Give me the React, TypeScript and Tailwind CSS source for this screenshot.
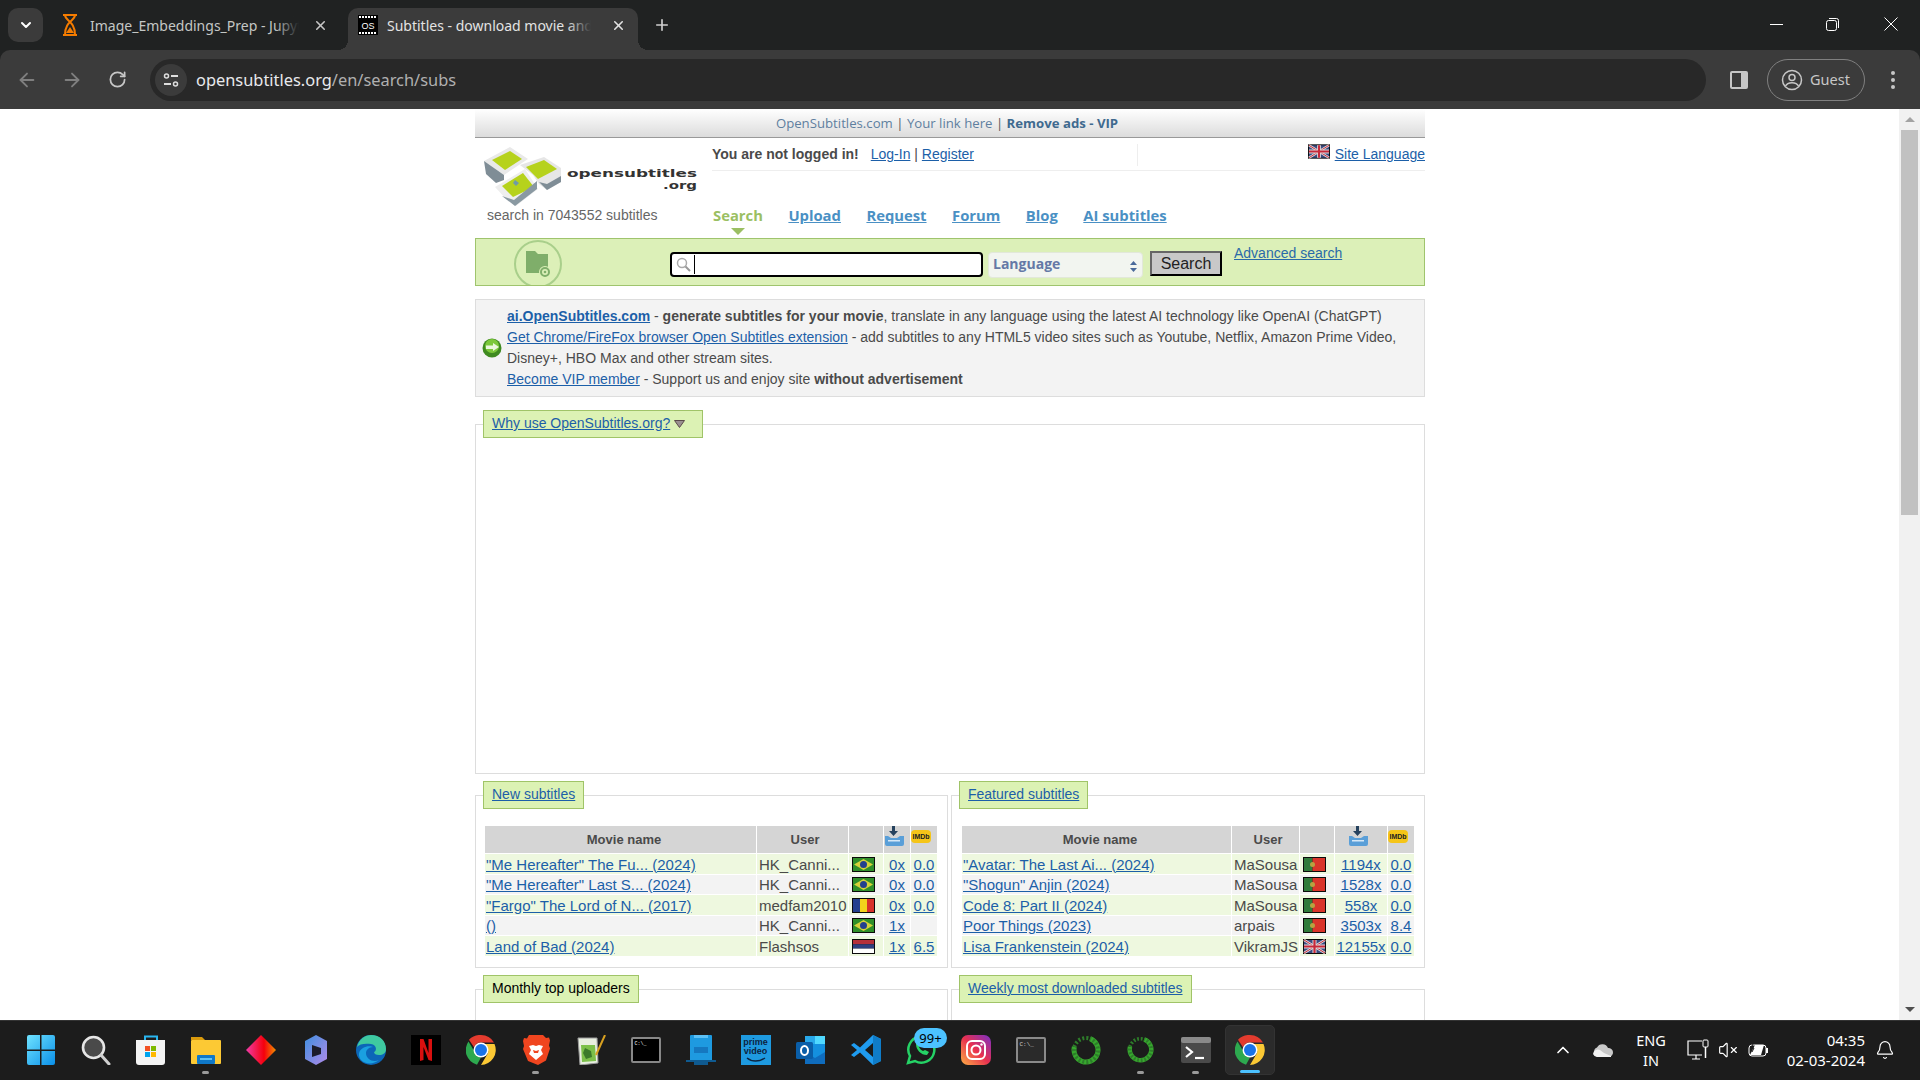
import React from "react";
import { ArrowLeft, ArrowRight, RotateCw, X, Plus, ChevronDown, ChevronUp, Bell, VolumeX } from "lucide-react";

const Link = ({ children, className = "" }: { children: React.ReactNode; className?: string }) => (
  <a className={`text-[#1c5fa8] underline ${className}`}>{children}</a>
);

const ChromeIcon = () => (
  <svg width="30" height="30" viewBox="0 0 30 30">
    <path d="M15 0a15 15 0 0 1 13 7.500H15a7.500 7.500 0 0 0-7 4.700L3 4.800A15 15 0 0 1 15 0z" fill="#e33b2e" />
    <path d="M2.500 6.500 9 17.500a7.500 7.500 0 0 0 6 5l-4 7.200A15 15 0 0 1 2.500 6.500z" fill="#2da94f" />
    <path d="M28.500 9H16a7.500 7.500 0 0 1 6 9l-7 12A15 15 0 0 0 28.500 9z" fill="#fcc934" />
    <circle cx="15" cy="15" r="7.500" fill="#fff" />
    <circle cx="15" cy="15" r="6" fill="#1a73e8" />
  </svg>
);

const Ring = ({ size }: { size: number }) => (
  <svg width={size} height={size} viewBox="0 0 30 30">
    <circle cx="15" cy="15" r="12" fill="none" stroke="#37a82e" strokeWidth="5" strokeDasharray="55 20" transform="rotate(-70 15 15)" />
    <circle cx="15" cy="15" r="12" fill="none" stroke="#2e7d2a" strokeWidth="4" strokeDasharray="2 2" strokeDashoffset="-55" transform="rotate(-70 15 15)" />
  </svg>
);

const taskbarIcons: { key: string; icon: React.ReactNode; dot?: boolean }[] = [
  {
    key: "start",
    icon: (
      <svg width="30" height="30" viewBox="0 0 30 30">
        <defs>
          <linearGradient id="win" x1="0" y1="0" x2="1" y2="1">
            <stop offset="0" stopColor="#6fe3ff" />
            <stop offset="1" stopColor="#0a8fe8" />
          </linearGradient>
        </defs>
        <path d="M1 2a2 2 0 0 1 2-2h11v14.500H1zM15.500 0H27a2 2 0 0 1 2 2v12.500H15.500zM1 16h13v14H3a2 2 0 0 1-2-2zM15.500 16H29v12a2 2 0 0 1-2 2H15.500z" fill="url(#win)" />
      </svg>
    ),
  },
  {
    key: "search",
    icon: (
      <svg width="30" height="30" viewBox="0 0 30 30">
        <circle cx="12.500" cy="12.500" r="10.500" fill="#4a4a4a" stroke="#e6e6e6" strokeWidth="2.600" />
        <path d="M20 20l8 9" stroke="#d0d0d0" strokeWidth="3" strokeLinecap="round" />
      </svg>
    ),
  },
  {
    key: "store",
    icon: (
      <svg width="30" height="30" viewBox="0 0 30 30">
        <path d="M9 5V1.500h12V5" fill="none" stroke="#29b6f0" strokeWidth="2" />
        <path d="M0 5h29v22a3 3 0 0 1-3 3H3a3 3 0 0 1-3-3z" fill="#f4f4f4" />
        <rect x="9" y="11" width="5" height="5" fill="#f25022" />
        <rect x="15" y="11" width="5" height="5" fill="#7fba00" />
        <rect x="9" y="17" width="5" height="5" fill="#00a4ef" />
        <rect x="15" y="17" width="5" height="5" fill="#ffb900" />
      </svg>
    ),
  },
  {
    key: "files",
    dot: true,
    icon: (
      <svg width="30" height="30" viewBox="0 0 30 30">
        <path d="M0 2h11l3 3H0z" fill="#d99a0c" />
        <rect y="5" width="30" height="24" rx="1" fill="#fcc934" />
        <rect x="6" y="20" width="18" height="9" rx="1" fill="#0f78c8" />
        <rect x="9" y="23" width="12" height="2" fill="#5cc0f5" />
      </svg>
    ),
  },
  {
    key: "diamond",
    icon: (
      <svg width="30" height="30" viewBox="0 0 30 30">
        <defs>
          <linearGradient id="dia" x1="0" y1="0" x2="1" y2="0">
            <stop offset="0" stopColor="#f03ca8" />
            <stop offset="0.6" stopColor="#f5000c" />
            <stop offset="1" stopColor="#f09000" />
          </linearGradient>
        </defs>
        <path d="M15 0l15 15-15 15L0 15z" fill="url(#dia)" />
      </svg>
    ),
  },
  {
    key: "copilot",
    icon: (
      <svg width="30" height="30" viewBox="0 0 30 30">
        <defs>
          <linearGradient id="cop" x1="0" y1="0" x2="1" y2="1">
            <stop offset="0" stopColor="#3f8fe0" />
            <stop offset="1" stopColor="#b08ae8" />
          </linearGradient>
        </defs>
        <path d="M15 0l11 6v18l-11 6-11-6V6z" fill="url(#cop)" />
        <path d="M11 10l9 3v6l-9 3z" fill="#1c1c2a" />
      </svg>
    ),
  },
  {
    key: "edge",
    icon: (
      <svg width="30" height="30" viewBox="0 0 30 30">
        <circle cx="15" cy="15" r="15" fill="#0c66b8" />
        <path d="M1 12C3 4 9 0 15 0c9 0 15 6 15 14 0 4-3 6-7 6-3 0-5-1-5-3 3-1 3-7-3-8C9 8 3 9 1 12z" fill="#3fc9a0" />
        <path d="M10 18c0 6 7 10 13 7-6 5-14 4-18 0-3-4-3-9 2-12 3-2 8-2 10-1-4 0-7 3-7 6z" fill="#1aa0e0" />
      </svg>
    ),
  },
  {
    key: "netflix",
    icon: (
      <div className="w-[30px] h-[30px] bg-black flex items-center justify-center">
        <svg width="12" height="22" viewBox="0 0 12 22">
          <path d="M0 0h3.500l5 14V0H12v22l-3.500-1-5-13v13L0 22z" fill="#d8100f" />
        </svg>
      </div>
    ),
  },
  { key: "chrome", icon: <ChromeIcon /> },
  {
    key: "brave",
    dot: true,
    icon: (
      <svg width="30" height="30" viewBox="0 0 30 30">
        <path d="M8 0h14l3 3 3-.500 1 3-1 5 1 3-4 12-8 4.500L7 26 2 14l1-3-1-5 1-3 3 .500z" fill="#f0451f" />
        <path d="M8 11l4-1 3 1 3-1 4 1-2 4 2 4-7 6-7-6 2-4z" fill="#fff" />
        <path d="M12 15l3 1 3-1-1 3h-4z" fill="#f0451f" />
      </svg>
    ),
  },
  {
    key: "notepad",
    icon: (
      <svg width="30" height="30" viewBox="0 0 30 30">
        <path d="M2 3h19l1 25-18 2z" fill="#e8efe0" stroke="#9a9a9a" />
        <path d="M5 10h14l1 16-14 1z" fill="#7cc04a" />
        <path d="M9 13l6 3 1 6-6 2-3-6z" fill="#3b7a2a" />
        <path d="M29 0l-9 20" stroke="#d8a020" strokeWidth="2" />
      </svg>
    ),
  },
  {
    key: "terminal",
    icon: (
      <div className="w-[30px] h-[26px] bg-black border-2 border-[#888] rounded-[2px] text-[5px] leading-none text-white font-['Liberation_Mono',monospace] pl-[2px] pt-[3px]">
        C:\_
      </div>
    ),
  },
  {
    key: "device",
    icon: (
      <svg width="30" height="30" viewBox="0 0 30 30">
        <path d="M4 1a1 1 0 0 1 1-1h20a1 1 0 0 1 1 1v24H4z" fill="#1e9ae0" />
        <rect x="8" y="12" width="14" height="6" fill="#1578c0" />
        <rect x="8" y="0" width="14" height="3" fill="#5cc0f5" />
        <path d="M0 25h30v2H0z" fill="#0f5a90" />
        <rect x="8" y="25" width="14" height="5" fill="#0f5a90" />
      </svg>
    ),
  },
  {
    key: "prime",
    icon: (
      <div className="w-[30px] h-[30px] bg-[#1e9ae0] flex flex-col items-center pt-[3px] text-[#0c2440] text-[9px] font-bold leading-[9px] font-['Liberation_Sans',sans-serif]">
        <span>prime</span>
        <span>video</span>
        <svg width="20" height="6" viewBox="0 0 20 6" className="mt-[1px]">
          <path d="M1 1c5 4 12 4 18 0" stroke="#0c2440" strokeWidth="1.500" fill="none" />
        </svg>
      </div>
    ),
  },
  {
    key: "outlook",
    icon: (
      <svg width="30" height="30" viewBox="0 0 30 30">
        <rect x="9" y="1" width="20" height="28" rx="2" fill="#1490df" />
        <rect x="19" y="1" width="10" height="8" fill="#50d9ff" />
        <rect x="9" y="1" width="10" height="8" fill="#28a8ea" />
        <path d="M9 17l10 6 10-6v12H9z" fill="#0f6cbd" />
        <rect y="7" width="17" height="17" rx="1.500" fill="#0a5ea8" />
        <ellipse cx="8.500" cy="15.500" rx="3.500" ry="4.500" fill="none" stroke="#fff" strokeWidth="2" />
      </svg>
    ),
  },
  {
    key: "vscode",
    icon: (
      <svg width="30" height="30" viewBox="0 0 30 30">
        <path d="M22 0l8 4v22l-8 4-13-12.500-6 4.500L0 20l6-5-6-5 3-2 6 4.500z" fill="#1f9cf0" />
        <path d="M22 8l-8 7 8 7z" fill="#1a1c1c" />
        <path d="M22 0l8 4v22l-8 4z" fill="#0f7cc8" />
      </svg>
    ),
  },
  {
    key: "whatsapp",
    icon: (
      <svg width="30" height="30" viewBox="0 0 30 30">
        <path d="M2 28l2-7a13 13 0 1 1 5 5z" fill="none" stroke="#25d366" strokeWidth="2.500" />
        <path d="M10 9c0 6 5 11 11 11l2-3-4-2-2 1c-2-1-3-2-4-4l1-2-2-4z" fill="#25d366" />
      </svg>
    ),
  },
  {
    key: "instagram",
    icon: (
      <svg width="30" height="30" viewBox="0 0 30 30">
        <defs>
          <linearGradient id="insta" x1="0" y1="1" x2="1" y2="0">
            <stop offset="0" stopColor="#fdb045" />
            <stop offset="0.5" stopColor="#e8304f" />
            <stop offset="1" stopColor="#7a30c8" />
          </linearGradient>
        </defs>
        <rect width="30" height="30" rx="7" fill="url(#insta)" />
        <rect x="6" y="6" width="18" height="18" rx="5" fill="none" stroke="#fff" strokeWidth="2" />
        <circle cx="15" cy="15" r="4.500" fill="none" stroke="#fff" strokeWidth="2" />
        <circle cx="20.500" cy="9.500" r="1.200" fill="#fff" />
      </svg>
    ),
  },
  {
    key: "cmd",
    icon: (
      <div className="w-[30px] h-[26px] bg-[#2a2a2a] border-2 border-[#8a8a8a] rounded-[2px] text-[6px] leading-none text-[#ccc] font-['Liberation_Mono',monospace] pl-[2px] pt-[3px]">
        C:\_
      </div>
    ),
  },
  { key: "ring1", icon: <Ring size={30} /> },
  { key: "ring2", dot: true, icon: <Ring size={27} /> },
  {
    key: "term2",
    dot: true,
    icon: (
      <svg width="30" height="30" viewBox="0 0 30 30">
        <rect y="2" width="30" height="26" rx="2" fill="#4a4a4a" />
        <rect y="2" width="30" height="6" rx="2" fill="#8a8a8a" />
        <path d="M5 12l6 5-6 5" fill="none" stroke="#fff" strokeWidth="2.200" />
        <path d="M14 23h9" stroke="#fff" strokeWidth="2.200" />
      </svg>
    ),
  },
];

const Brazil = () => (
  <svg width="23" height="15" viewBox="0 0 23 15" className="block">
    <rect width="23" height="15" fill="#0b0b0b" />
    <rect x="1" y="1" width="21" height="13" fill="#2f8f2a" />
    <path d="M11.500 2L21 7.500 11.500 13 2 7.500z" fill="#d6d23a" />
    <circle cx="11.500" cy="7.500" r="3.500" fill="#24408e" />
  </svg>
);

const Romania = () => (
  <svg width="23" height="15" viewBox="0 0 23 15" className="block">
    <rect width="23" height="15" fill="#0b0b0b" />
    <rect x="1" y="1" width="7" height="13" fill="#24408e" />
    <rect x="8" y="1" width="7" height="13" fill="#f2d21b" />
    <rect x="15" y="1" width="7" height="13" fill="#d8322a" />
  </svg>
);

const Serbia = () => (
  <svg width="23" height="15" viewBox="0 0 23 15" className="block">
    <rect width="23" height="15" fill="#0b0b0b" />
    <rect x="1" y="1" width="21" height="4.300" fill="#b5303a" />
    <rect x="1" y="5.300" width="21" height="4.300" fill="#2e3f80" />
    <rect x="1" y="9.600" width="21" height="4.400" fill="#fff" />
  </svg>
);

const Portugal = () => (
  <svg width="23" height="15" viewBox="0 0 23 15" className="block">
    <rect width="23" height="15" fill="#0b0b0b" />
    <rect x="1" y="1" width="8.500" height="13" fill="#2f7a3a" />
    <rect x="9.500" y="1" width="12.500" height="13" fill="#d9342a" />
    <circle cx="9.500" cy="7.500" r="2.500" fill="#b8a040" />
  </svg>
);

const UK = ({ w = 23, h = 15 }: { w?: number; h?: number }) => (
  <svg width={w} height={h} viewBox="0 0 23 15" className="block">
    <rect width="23" height="15" fill="#0b0b0b" />
    <rect x="1" y="1" width="21" height="13" fill="#3a4a80" />
    <path d="M1 1l21 13M22 1L1 14" stroke="#ddd" strokeWidth="2.600" />
    <path d="M1 1l21 13M22 1L1 14" stroke="#c8283a" strokeWidth="1" />
    <path d="M11.500 1v13M1 7.500h21" stroke="#ddd" strokeWidth="4" />
    <path d="M11.500 1v13M1 7.500h21" stroke="#c8283a" strokeWidth="2.200" />
  </svg>
);

const DownloadIcon = () => (
  <svg width="21" height="20" viewBox="0 0 21 20" className="block">
    <path d="M8 0h3v5h3l-4.500 5L5 5h3z" fill="#26425e" />
    <path d="M1 10h3l3 2h6l3-2h4v8a2 2 0 0 1-2 2H3a2 2 0 0 1-2-2z" fill="#5a9fd8" />
    <rect x="4" y="14" width="12" height="1.500" fill="#d5e8f7" />
  </svg>
);

const ImdbIcon = () => (
  <div className="w-[20px] h-[13px] rounded-[4px] bg-[#f5c518] text-[7px] font-bold leading-[13px] text-center text-[#222] font-['Liberation_Sans',sans-serif] overflow-hidden">
    IMDb
  </div>
);

type Row = {
  movie: string;
  user: string;
  flag: React.ReactNode;
  downloads: string;
  rating: string;
};

const newSubs: Row[] = [
  { movie: '"Me Hereafter" The Fu... (2024)', user: "HK_Canni...", flag: <Brazil />, downloads: "0x", rating: "0.0" },
  { movie: '"Me Hereafter" Last S... (2024)', user: "HK_Canni...", flag: <Brazil />, downloads: "0x", rating: "0.0" },
  { movie: '"Fargo" The Lord of N... (2017)', user: "medfam2010", flag: <Romania />, downloads: "0x", rating: "0.0" },
  { movie: "()", user: "HK_Canni...", flag: <Brazil />, downloads: "1x", rating: "" },
  { movie: "Land of Bad (2024)", user: "Flashsos", flag: <Serbia />, downloads: "1x", rating: "6.5" },
];

const featuredSubs: Row[] = [
  { movie: '"Avatar: The Last Ai... (2024)', user: "MaSousa", flag: <Portugal />, downloads: "1194x", rating: "0.0" },
  { movie: '"Shogun" Anjin (2024)', user: "MaSousa", flag: <Portugal />, downloads: "1528x", rating: "0.0" },
  { movie: "Code 8: Part II (2024)", user: "MaSousa", flag: <Portugal />, downloads: "558x", rating: "0.0" },
  { movie: "Poor Things (2023)", user: "arpais", flag: <Portugal />, downloads: "3503x", rating: "8.4" },
  { movie: "Lisa Frankenstein (2024)", user: "VikramJS", flag: <UK />, downloads: "12155x", rating: "0.0" },
];

const rowHeights = ["h-[20px]", "h-[19px]", "h-[20px]", "h-[19px]", "h-[20px]"];

const SubsTable = ({ rows, widths }: { rows: Row[]; widths: number[] }) => (
  <table className="table-fixed border-separate border-spacing-[1px] text-[15px] leading-[17px] text-[#4a4a4a]">
    <colgroup>
      {widths.map((w, i) => (
        <col key={i} style={{ width: w }} />
      ))}
    </colgroup>
    <thead>
      <tr className="h-[27px] bg-[#d5d5d5] text-[13px] font-bold">
        <th className="pl-[7px]">Movie name</th>
        <th className="pl-[5px]">User</th>
        <th></th>
        <th className="align-top">
          <div className="flex justify-center pr-[5px]">
            <DownloadIcon />
          </div>
        </th>
        <th className="align-top">
          <div className="flex justify-start pt-[4px]">
            <ImdbIcon />
          </div>
        </th>
      </tr>
    </thead>
    <tbody>
      {rows.map((row, i) => (
        <tr key={i} className={`${rowHeights[i]} ${i % 2 === 0 ? "bg-[#eef8df]" : "bg-[#f3f3f3]"}`}>
          <td className="p-0 pl-[1px] whitespace-nowrap overflow-hidden">
            <Link>{row.movie}</Link>
          </td>
          <td className="p-0 pl-[2px] whitespace-nowrap overflow-hidden">{row.user}</td>
          <td className="p-0 pl-[3px]">{row.flag}</td>
          <td className="p-0 text-center whitespace-nowrap">
            <Link>{row.downloads}</Link>
          </td>
          <td className="p-0 text-center">{row.rating && <Link>{row.rating}</Link>}</td>
        </tr>
      ))}
    </tbody>
  </table>
);

const Legend = ({ children }: { children: React.ReactNode }) => (
  <legend className="ml-[7px] h-[28px] px-[8px] leading-[25px] bg-[#dcf2b4] border border-[#a0c468] text-[14px] whitespace-nowrap">
    {children}
  </legend>
);

const Logo = () => (
  <svg width="220" height="62" viewBox="0 0 220 62" className="block">
    <g>
      <path d="M2 17l26-14 18 12-24 16z" fill="#e9e9e9" />
      <path d="M10 16l18-9 12 8-17 11z" fill="#b6d21c" />
      <path d="M2 17l20 14 0 5-8 3-10-9z" fill="#7f8d96" />
      <path d="M38 21l24-8 17 11 0 14-14 8-8-6-6-9z" fill="#e6e6e6" />
      <path d="M44 23l18-7 13 9-19 10z" fill="#b6d21c" />
      <path d="M57 38l8 8 14-8v-6l-14 8z" fill="#7f8d96" />
      <path d="M13 43l30-18 13 20-22 17-10-7z" fill="#eeeeee" />
      <path d="M20 42l21-13 11 14-21 10z" fill="#b6d21c" />
      <path d="M20 52l13 10 22-17v-8L32 56z" fill="#8a99a2" />
      <path d="M33 36l4 3-3 3-3-3z" fill="#6f9aa8" />
    </g>
    <text x="85" y="33" textLength="130" lengthAdjust="spacingAndGlyphs" fontSize="11" fontWeight="700" fontFamily="'DejaVu Sans', sans-serif" fill="#333">
      opensubtitles
    </text>
    <text x="181" y="45" textLength="34" lengthAdjust="spacingAndGlyphs" fontSize="11" fontWeight="700" fontFamily="'DejaVu Sans', sans-serif" fill="#333">
      .org
    </text>
  </svg>
);

const Header = () => (
  <div className="flex h-[100px]">
    <div className="w-[237px] shrink-0">
      <div className="pl-[7px] pt-[6px]">
        <Logo />
      </div>
      <div className="pl-[12px] text-[14px] leading-[18px] text-[#666]">search in 7043552 subtitles</div>
    </div>
    <div className="flex-1">
      <div className="h-[33px] border-b border-[#eee] flex items-start">
        <div className="pt-[7px] text-[14px] leading-[18px] text-[#4a4a4a] whitespace-nowrap">
          <b className="font-bold">You are not logged in!</b>
          <span className="ml-[12px]">
            <Link>Log-In</Link> | <Link>Register</Link>
          </span>
        </div>
        <div className="ml-auto flex items-start">
          <div className="w-px h-[22px] mt-[6px] bg-[#eee] mr-[170px]" />
          <div className="mt-[6px] mr-[5px]">
            <UK w={22} h={15} />
          </div>
          <div className="pt-[7px] text-[14px] leading-[18px]">
            <Link>Site Language</Link>
          </div>
        </div>
      </div>
      <div className="flex gap-[25.500px] pt-[34px] pl-[1px] text-[14.800px] leading-[20px] font-bold font-['Open_Sans',sans-serif] text-[#4a90c4]">
        <span className="relative text-[#9bbf63]">
          Search
          <span className="absolute left-[18px] top-[23px] w-0 h-0 border-x-[7px] border-x-transparent border-t-[7px] border-t-[#9bbf63]" />
        </span>
        <span className="underline">Upload</span>
        <span className="underline">Request</span>
        <span className="underline">Forum</span>
        <span className="underline">Blog</span>
        <span className="underline">AI subtitles</span>
      </div>
    </div>
  </div>
);

const SearchBar = () => (
  <div className="h-[48px] bg-[#dcf0b8] border border-[#9fc46d] flex items-start overflow-hidden">
    <div className="ml-[38px] mt-[1px] w-[48px] h-[48px] shrink-0 rounded-full border-2 border-[#a9cf8b] flex items-center justify-center">
      <svg width="30" height="28" viewBox="0 0 30 28" className="ml-[2px]">
        <path d="M2 1h9l3 3h10v19H2z" fill="#7fae6a" />
        <circle cx="21" cy="22" r="6" fill="#dcf0b8" />
        <circle cx="21" cy="22" r="4" fill="none" stroke="#7fae6a" strokeWidth="2" />
        <circle cx="21" cy="22" r="1.300" fill="#7fae6a" />
      </svg>
    </div>
    <div className="ml-[108px] mt-[13px] w-[313px] h-[25px] bg-white border-2 border-black rounded-[4px] flex items-center pl-[4px] shrink-0">
      <svg width="15" height="15" viewBox="0 0 15 15">
        <circle cx="6" cy="6" r="4.500" fill="none" stroke="#aaa" strokeWidth="1.500" />
        <path d="M9.500 9.500l4.500 4.500" stroke="#999" strokeWidth="2" />
      </svg>
      <div className="w-px h-[19px] bg-black ml-[3px]" />
    </div>
    <div className="ml-[5px] mt-[13px] w-[155px] h-[26px] bg-[#f2f5f0] border border-[#e2e8da] rounded-[4px] flex items-center justify-between pl-[4px] pr-[5px] pb-[3px] shrink-0 text-[14px] font-bold font-['Open_Sans',sans-serif] text-[#6579a6]">
      Language
      <svg width="7" height="11" viewBox="0 0 7 11" className="mt-[5px]">
        <path d="M3.500 0L7 4H0zM3.500 11L0 7h7z" fill="#4a6a9a" />
      </svg>
    </div>
    <div className="ml-[7px] mt-[12px] w-[72px] h-[25px] bg-[#c8c8c8] border-2 border-t-[#666] border-l-[#666] border-r-black border-b-black text-[16px] leading-[21px] text-center text-[#222] shrink-0">
      Search
    </div>
    <div className="ml-[12px] mt-[6px] text-[14px] leading-[16px]">
      <Link className="text-[#2a6aa8]">Advanced search</Link>
    </div>
  </div>
);

const InfoBox = () => (
  <div className="mt-[13px] h-[98px] bg-[#f3f3f3] border border-[#ddd] flex items-center text-[14px] leading-[21px] text-[#4a4a4a]">
    <svg width="20" height="20" viewBox="0 0 20 20" className="ml-[6px] shrink-0">
      <circle cx="10" cy="10" r="9.500" fill="#3f8a20" />
      <circle cx="10" cy="8" r="7" fill="#7cc83a" />
      <path d="M17 9l-6-4v2.500H4v3.500h7V13z" fill="#eaf7dd" />
    </svg>
    <div className="ml-[5px] whitespace-nowrap">
      <div>
        <Link className="font-bold">ai.OpenSubtitles.com</Link> - <b>generate subtitles for your movie</b>, translate in any language using the latest AI technology like OpenAI (ChatGPT)
      </div>
      <div>
        <Link>Get Chrome/FireFox browser Open Subtitles extension</Link> - add subtitles to any HTML5 video sites such as Youtube, Netflix, Amazon Prime Video,
      </div>
      <div>Disney+, HBO Max and other stream sites.</div>
      <div>
        <Link>Become VIP member</Link> - Support us and enjoy site <b>without advertisement</b>
      </div>
    </div>
  </div>
);

const TabStrip = () => (
  <div className="h-[50px] bg-[#202222] flex items-start shrink-0 font-['Noto_Sans',sans-serif] text-[14px]">
    <div className="ml-[8px] mt-[8px] w-[35px] h-[34px] rounded-[10px] bg-[#3b3b3b] flex items-center justify-center">
      <ChevronDown size={16} strokeWidth={3} className="text-white" />
    </div>
    <div className="w-[305px] h-[42px] mt-[8px] pb-[8px] flex items-center">
      <svg width="16" height="22" viewBox="0 0 16 22" className="ml-[19px] shrink-0">
        <path d="M1 1h14M1 21h14M3 1c0 6 10 6 10 20M13 1C13 7 3 7 3 21" fill="none" stroke="#f57c00" strokeWidth="2" />
        <path d="M4 19l4-6 4 6z" fill="#f57c00" />
      </svg>
      <div className="relative ml-[12px] w-[209px] overflow-hidden whitespace-nowrap text-[#c4c7c5]">
        Image_Embeddings_Prep - Jupyter Notebook
        <span className="absolute right-0 top-0 bottom-0 w-[24px] bg-gradient-to-r from-transparent to-[#202222]" />
      </div>
      <X size={15} strokeWidth={2.500} className="ml-[14px] text-[#c7c7c7] shrink-0" />
    </div>
    <div className="relative w-[290px] h-[42px] mt-[8px] pb-[8px] bg-[#3b3b3b] rounded-t-[10px] flex items-center">
      <span className="absolute -left-[10px] bottom-0 w-[10px] h-[10px] bg-[radial-gradient(circle_at_0_0,transparent_10px,#3b3b3b_10px)]" />
      <span className="absolute -right-[10px] bottom-0 w-[10px] h-[10px] bg-[radial-gradient(circle_at_100%_0,transparent_10px,#3b3b3b_10px)]" />
      <svg width="20" height="20" viewBox="0 0 20 20" className="ml-[10px] shrink-0">
        <rect width="20" height="20" fill="#000" />
        <path d="M1 2h18M1 18h18" stroke="#fff" strokeWidth="2" strokeDasharray="2 1" />
        <text x="10" y="13.500" textAnchor="middle" fontSize="9" fill="#fff" fontFamily="'Liberation Sans', sans-serif">OS</text>
      </svg>
      <div className="relative ml-[9px] w-[204px] overflow-hidden whitespace-nowrap text-[#e3e3e3]">
        Subtitles - download movie and TV Series
        <span className="absolute right-0 top-0 bottom-0 w-[24px] bg-gradient-to-r from-transparent to-[#3b3b3b]" />
      </div>
      <X size={15} strokeWidth={2.500} className="ml-[20px] text-[#e3e3e3] shrink-0" />
    </div>
    <Plus size={18} strokeWidth={2.200} className="ml-[15px] mt-[16px] text-[#d0d0d0]" />
    <div className="ml-auto flex items-center h-[48px] text-white">
      <div className="w-[13px] h-px bg-white mr-[43px]" />
      <svg width="13" height="13" viewBox="0 0 13 13" className="mr-[45px]">
        <rect x="0.500" y="2.500" width="10" height="10" rx="2" fill="none" stroke="#fff" />
        <path d="M3 .5h7.500a2 2 0 0 1 2 2V10" fill="none" stroke="#fff" />
      </svg>
      <svg width="14" height="14" viewBox="0 0 14 14" className="mr-[22px]">
        <path d="M.5.5l13 13M13.500.5l-13 13" stroke="#fff" />
      </svg>
    </div>
  </div>
);

const Toolbar = () => (
  <div className="h-[59px] bg-[#202222] shrink-0">
    <div className="h-full bg-[#3b3b3b] rounded-t-[10px] flex items-center font-['Noto_Sans',sans-serif]">
      <ArrowLeft size={22} className="ml-[16px] text-[#7f7f7f] shrink-0" />
      <ArrowRight size={22} className="ml-[23px] text-[#7f7f7f] shrink-0" />
      <RotateCw size={19} strokeWidth={2.200} className="ml-[25px] text-[#c7c7c7] shrink-0" />
      <div className="ml-[23px] w-[1556px] h-[42px] rounded-full bg-[#282828] flex items-center shrink-0">
        <div className="ml-[5px] w-[32px] h-[32px] rounded-full bg-[#3b3b3b] flex items-center justify-center">
          <svg width="16" height="14" viewBox="0 0 16 14">
            <circle cx="3.500" cy="3" r="2" fill="none" stroke="#ddd" strokeWidth="1.500" />
            <path d="M8 3h7M1 11h7" stroke="#ddd" strokeWidth="1.800" />
            <circle cx="12.500" cy="11" r="2" fill="none" stroke="#ddd" strokeWidth="1.500" />
          </svg>
        </div>
        <div className="ml-[9px] pt-[1px] text-[16.400px] text-[#e8eaed] whitespace-nowrap">
          opensubtitles.org<span className="text-[#b0b0b0]">/en/search/subs</span>
        </div>
      </div>
      <div className="ml-[24px] w-[18px] h-[18px] rounded-[2px] border-2 border-[#c7c7c7] bg-[#c7c7c7] flex shrink-0">
        <div className="w-[9px] h-full bg-[#3b3b3b]" />
      </div>
      <div className="ml-[19px] w-[98px] h-[42px] rounded-full border border-[#808080] flex items-center text-[14.500px] text-[#c7c7c7] shrink-0">
        <svg width="22" height="22" viewBox="0 0 22 22" className="ml-[13px]">
          <circle cx="11" cy="11" r="9.500" fill="none" stroke="#c7c7c7" strokeWidth="1.500" />
          <circle cx="11" cy="8.500" r="3" fill="none" stroke="#c7c7c7" strokeWidth="1.500" />
          <path d="M4.500 17c2-4.500 11-4.500 13 0" fill="none" stroke="#c7c7c7" strokeWidth="1.500" />
        </svg>
        <span className="ml-[7px]">Guest</span>
      </div>
      <div className="ml-[26px] flex flex-col gap-[3px] shrink-0">
        <div className="w-[4px] h-[4px] rounded-full bg-[#c7c7c7]" />
        <div className="w-[4px] h-[4px] rounded-full bg-[#c7c7c7]" />
        <div className="w-[4px] h-[4px] rounded-full bg-[#c7c7c7]" />
      </div>
    </div>
  </div>
);

const Taskbar = () => (
  <div className="h-[60px] bg-[#1c1c1c] border-t border-[#333] pb-[2px] flex items-center shrink-0 font-['Noto_Sans',sans-serif] text-white">
    <div className="flex ml-[13px]">
      {taskbarIcons.map((item) => (
        <div key={item.key} className="relative w-[55px] h-[50px] flex items-center justify-center">
          {item.icon}
          {item.key === "whatsapp" && (
            <span className="absolute left-[21px] top-[3px] w-[33px] h-[20px] rounded-full bg-[#4cc2ff] text-[13px] leading-[20px] text-center text-black">
              99+
            </span>
          )}
          {item.dot && <span className="absolute bottom-[1px] left-[24px] w-[7px] h-[3px] rounded-full bg-[#9a9a9a]" />}
        </div>
      ))}
      <div className="relative w-[50px] h-[50px] ml-[2px] rounded-[5px] bg-[#2b2b2b] border border-[#333] flex items-center justify-center">
        <ChromeIcon />
        <span className="absolute bottom-[1px] left-[14px] w-[20px] h-[3px] rounded-full bg-[#4cc2ff]" />
      </div>
    </div>
    <ChevronUp size={20} strokeWidth={2} className="ml-[278px] text-white shrink-0" />
    <svg width="21" height="14" viewBox="0 0 21 14" className="ml-[20px] shrink-0">
      <path d="M5 14a5 5 0 0 1-1-9.500A6 6 0 0 1 15 5a4.500 4.500 0 0 1 1 9z" fill="#c9c9c9" />
      <path d="M0 11a5 5 0 0 1 7-4l4 3 7 3v1H5a5 5 0 0 1-5-3z" fill="#f2f2f2" />
    </svg>
    <div className="ml-[21px] w-[32px] text-[14.500px] leading-[20px] text-center shrink-0">
      <div>ENG</div>
      <div>IN</div>
    </div>
    <svg width="22" height="21" viewBox="0 0 22 21" className="ml-[20px] shrink-0">
      <path d="M15 2H1v14h14M5 20h8M9 16v4" fill="none" stroke="#fff" strokeWidth="1.200" />
      <rect x="16" y="1" width="5" height="7" rx="1" fill="none" stroke="#fff" />
      <path d="M18.500 8v11" stroke="#fff" strokeWidth="1.500" />
    </svg>
    <VolumeX size={20} strokeWidth={1.400} className="ml-[9px] shrink-0" />
    <svg width="21" height="15" viewBox="0 0 21 15" className="ml-[10px] shrink-0">
      <rect x="1" y="3" width="17" height="11" rx="3" fill="none" stroke="#fff" />
      <rect x="18" y="6" width="2" height="5" fill="#fff" />
      <path d="M2 13l5-10h9l-3 10z" fill="#fff" />
      <path d="M6 0L3 6h3L4 10" fill="none" stroke="#1c1c1c" strokeWidth="1" />
    </svg>
    <div className="ml-[16px] w-[80px] text-[15px] leading-[20px] text-right shrink-0">
      <div>04:35</div>
      <div>02-03-2024</div>
    </div>
    <Bell size={20} strokeWidth={1.400} className="ml-[10px] shrink-0" />
  </div>
);

const Scrollbar = () => (
  <div className="w-[21px] bg-[#f1f1f1] shrink-0 flex flex-col items-center">
    <div className="h-[21px] flex items-center justify-center">
      <div className="w-0 h-0 border-x-[5px] border-x-transparent border-b-[5px] border-b-[#a3a3a3]" />
    </div>
    <div className="w-[17px] h-[385px] bg-[#c1c1c1]" />
    <div className="mt-auto h-[21px] flex items-center justify-center">
      <div className="w-0 h-0 border-x-[5px] border-x-transparent border-t-[5px] border-t-[#505050]" />
    </div>
  </div>
);

export default function App() {
  return (
    <div className="h-screen w-screen overflow-hidden flex flex-col bg-white">
      <TabStrip />
      <Toolbar />
      <div className="flex-1 flex min-h-0">
        <div className="flex-1 overflow-hidden font-['Liberation_Sans',sans-serif]">
          <div className="w-[950px] ml-[475px]">
            <div className="h-[29px] pr-[6px] border-b border-[#999] bg-gradient-to-b from-white to-[#dcdcdc] text-center text-[13.200px] leading-[29px] text-[#5f7f9f] font-['Open_Sans',sans-serif]">
              OpenSubtitles.com <span className="text-[#555]">|</span> Your link here <span className="text-[#555]">|</span>{" "}
              <b className="text-[#3f6a8f]">Remove ads - VIP</b>
            </div>
            <Header />
            <SearchBar />
            <InfoBox />
            <fieldset className="mt-[13px] border border-[#ddd]">
              <Legend>
                <Link>Why use OpenSubtitles.org?</Link>
                <svg width="11" height="8" viewBox="0 0 11 8" className="inline-block ml-[4px] mr-[9px]">
                  <path d="M.5.5h10L5.500 7.500z" fill="#9a9090" stroke="#5a4a4a" />
                </svg>
              </Legend>
              <div className="h-[335px]" />
            </fieldset>
            <div className="mt-[7px] flex gap-[3px]">
              <fieldset className="w-[473px] border border-[#ddd]">
                <Legend>
                  <Link>New subtitles</Link>
                </Legend>
                <div className="pt-[16px] pb-[10px] pl-[8px]">
                  <SubsTable rows={newSubs} widths={[271, 91, 34, 26, 26]} />
                </div>
              </fieldset>
              <fieldset className="w-[474px] border border-[#ddd]">
                <Legend>
                  <Link>Featured subtitles</Link>
                </Legend>
                <div className="pt-[16px] pb-[10px] pl-[9px]">
                  <SubsTable rows={featuredSubs} widths={[269, 67, 34, 52, 26]} />
                </div>
              </fieldset>
            </div>
            <div className="mt-[7px] flex gap-[3px]">
              <fieldset className="w-[473px] border border-[#ddd]">
                <Legend>
                  <span className="text-black">Monthly top uploaders</span>
                </Legend>
                <div className="h-[100px]" />
              </fieldset>
              <fieldset className="w-[474px] border border-[#ddd]">
                <Legend>
                  <Link>Weekly most downloaded subtitles</Link>
                </Legend>
                <div className="h-[100px]" />
              </fieldset>
            </div>
          </div>
        </div>
        <Scrollbar />
      </div>
      <Taskbar />
    </div>
  );
}
